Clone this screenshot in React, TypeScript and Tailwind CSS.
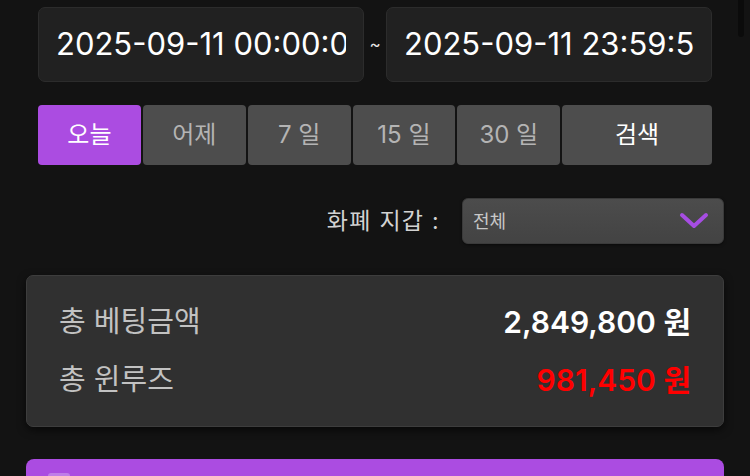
const ranges = ["오늘", "어제", "7 일", "15 일", "30 일"];

const font = { fontFamily: "Inter, 'Noto Sans CJK KR', sans-serif" };

export default function App() {
  return (
    <div className="relative w-[750px] h-[476px] overflow-hidden bg-[#131313] text-white" style={font}>
      {/* scrollbar thumb */}
      <div className="absolute right-[6px] top-0 h-[37px] w-[6px] rounded-b-full bg-[#0b0b0b]" />

      <div className="px-[26px]">
        <div className="px-[12px]">
          <div className="flex items-center pt-[7px]">
            <div className="w-[326px] shrink-0 h-[75px] flex items-center px-[17px] rounded-[7px] bg-[#212121] border border-[#2c2c2c]">
              <div className="flex-1 min-w-0 overflow-hidden">
                <span className="text-[31px] whitespace-nowrap">2025-09-11 00:00:00</span>
              </div>
            </div>
            <div className="w-[22px] shrink-0 text-center text-[17px] text-[#e5e5e5]">~</div>
            <div className="w-[326px] shrink-0 h-[75px] flex items-center px-[17px] rounded-[7px] bg-[#212121] border border-[#2c2c2c]">
              <div className="flex-1 min-w-0 overflow-hidden">
                <span className="text-[31px] whitespace-nowrap">2025-09-11 23:59:59</span>
              </div>
            </div>
          </div>

          <div className="flex gap-[2px] mt-[23px]">
            {ranges.map((r, i) => (
              <div
                key={r}
                className={
                  i === 0
                    ? "w-[103px] h-[60px] flex items-center justify-center rounded-[4px] bg-[#ab4ce1] text-white text-[24px]"
                    : "w-[103px] h-[60px] flex items-center justify-center rounded-[4px] bg-[#4d4d4d] text-[#b4b4b4] text-[24px]"
                }
              >
                {r}
              </div>
            ))}
            <div className="w-[150px] h-[60px] flex items-center justify-center rounded-[4px] bg-[#4d4d4d] text-white text-[24px]">
              검색
            </div>
          </div>
        </div>

        <div className="flex items-center justify-end gap-[22px] mt-[33px]">
          <span className="text-[23px] tracking-[1.3px] text-[#d2d2d2]">화폐 지갑 :</span>
          <div className="w-[262px] h-[46px] flex items-center justify-between pl-[10px] pr-[14px] rounded-[6px] bg-gradient-to-b from-[#4c4c4c] to-[#434343] border border-[#3a3a3a] shadow-[0_1px_3px_rgba(0,0,0,0.5)]">
            <span className="text-[18px] text-[#c8c8c8]">전체</span>
            <svg width="30" height="20" viewBox="0 0 30 20" fill="none">
              <path d="M3 4 L15 15 L27 4" stroke="#a64de2" strokeWidth="4" strokeLinecap="round" strokeLinejoin="round" />
            </svg>
          </div>
        </div>

        <div className="mt-[31px] h-[152px] flex flex-col justify-center gap-[13px] px-[32px] rounded-[7px] bg-[#303030] border border-[#3d3d3d] shadow-[0_3px_8px_rgba(0,0,0,0.6)]">
          <div className="flex items-center justify-between">
            <span className="text-[29px] text-[#c2c2c2]">총 베팅금액</span>
            <span className="text-[30px] font-semibold text-white">2,849,800 원</span>
          </div>
          <div className="flex items-center justify-between">
            <span className="text-[29px] text-[#c2c2c2]">총 윈루즈</span>
            <span className="text-[30px] font-semibold text-[#ff0000]">981,450 원</span>
          </div>
        </div>

        <div className="mt-[32px] h-[60px] rounded-[8px] bg-[#ab4ce1] px-[22px] pt-[14px]">
          <div className="w-[22px] h-[22px] rounded-[3px] bg-[#c07ce8]" />
        </div>
      </div>
    </div>
  );
}
